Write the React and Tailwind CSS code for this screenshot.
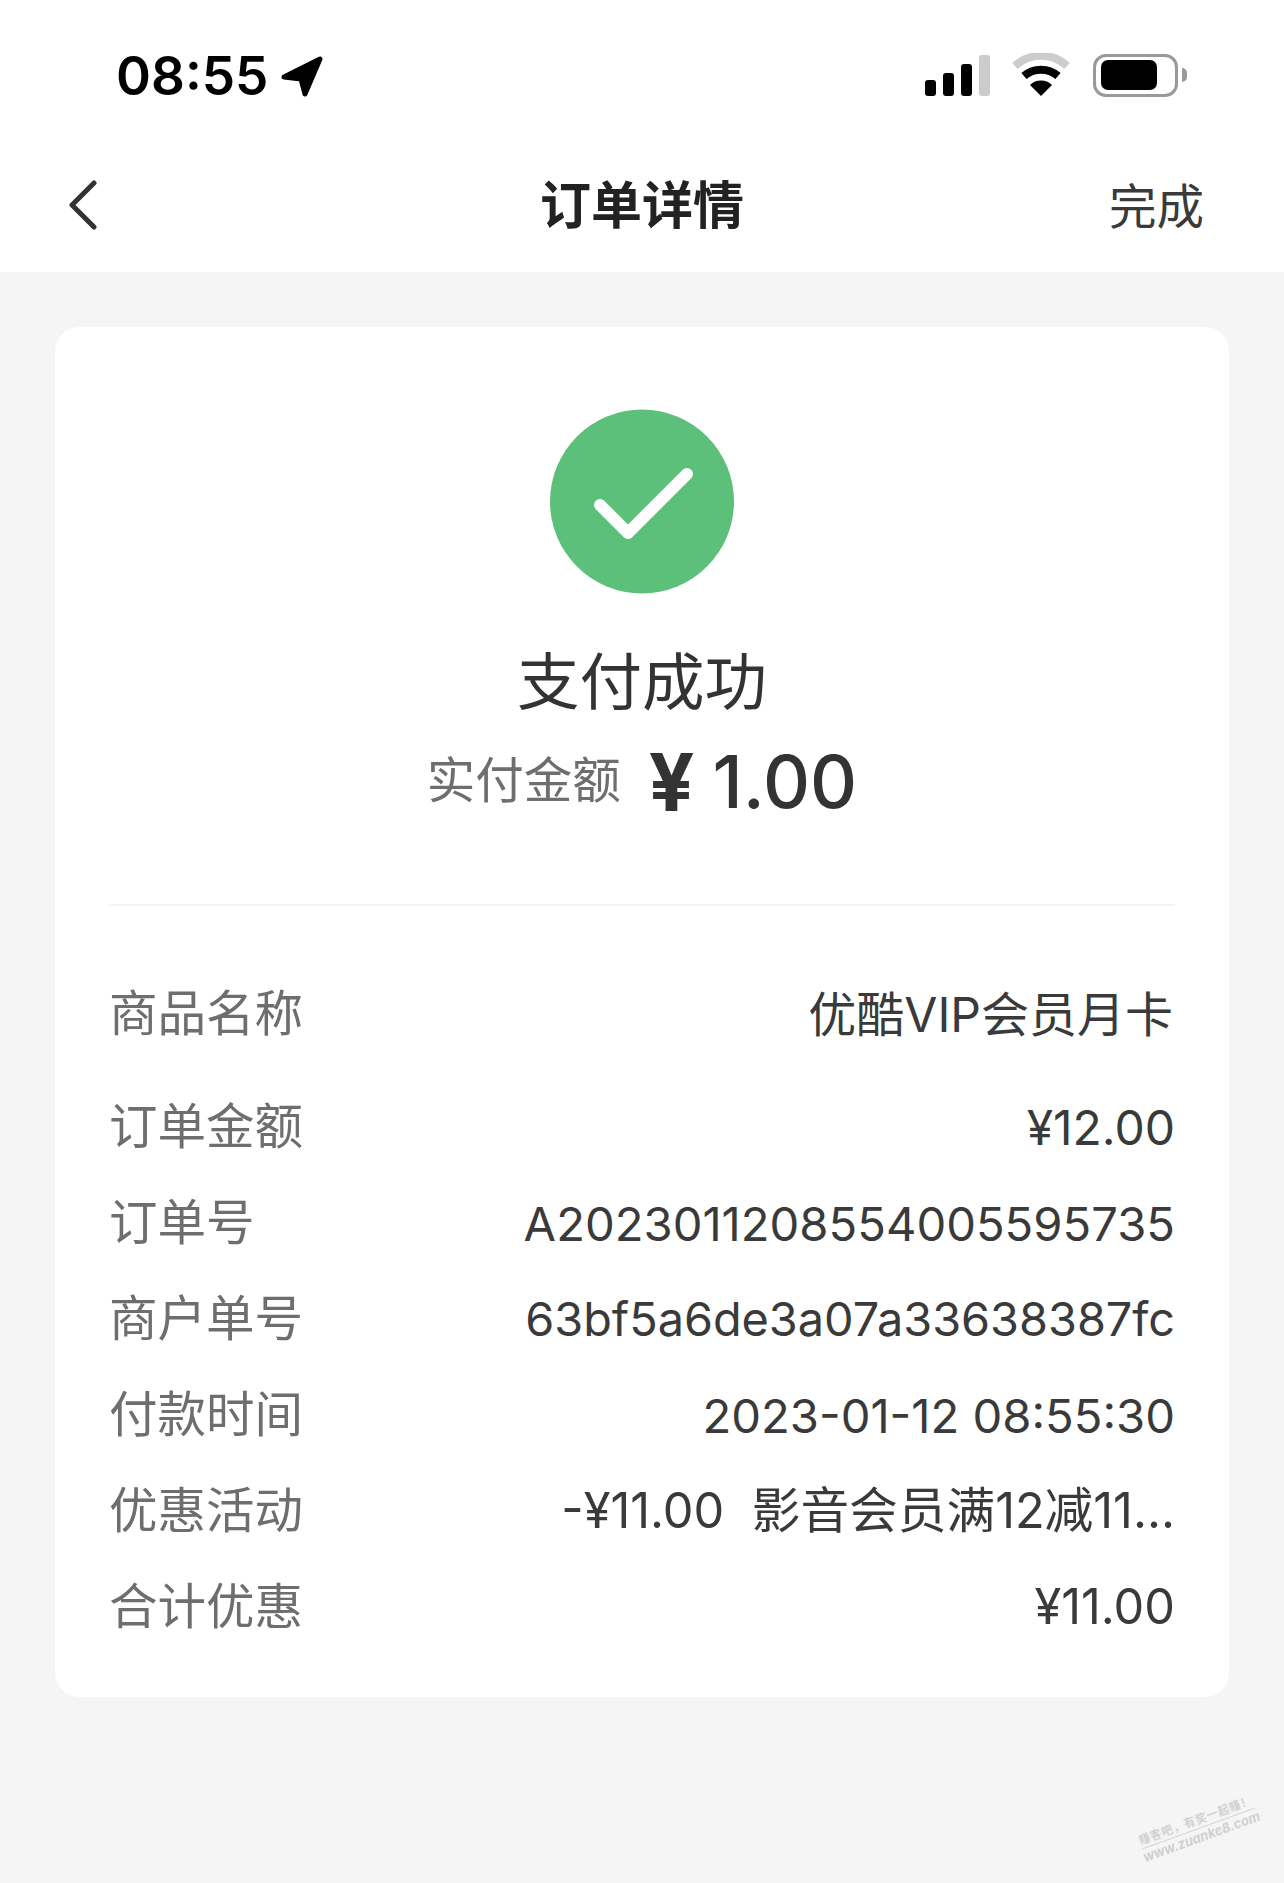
const sans = `font-['Inter','Noto_Sans_CJK_SC',sans-serif]`;

const rows = [
  ["订单金额", "¥12.00", "text-[48px]"],
  ["订单号", "A20230112085540055 95735".replace(" ", ""), "text-[47.2px]"],
  ["商户单号", "63bf5a6de3a07a33638387fc", "text-[46.8px]"],
  ["付款时间", "2023-01-12 08:55:30", "text-[47.2px]"],
  ["优惠活动", "-¥11.00  影音会员满12减11...", "text-[48.7px]"],
  ["合计优惠", "¥11.00", "text-[48.7px]"],
];

function Row({ label, value, size }) {
  return (
    <div className="flex h-[96px] items-center justify-between">
      <span className="text-[48.5px] leading-none text-[#6e6e6e]">{label}</span>
      <span className={`whitespace-pre leading-none text-[#3a3a3a] ${size}`}>{value}</span>
    </div>
  );
}

function StatusBar() {
  return (
    <div className="flex h-[122px] items-start justify-between pt-[53px] pl-[116px] pr-[97px]">
      <div className="flex items-center gap-[13px]">
        <span className="text-[53px] leading-[46px] font-semibold text-black">08:55</span>
        <svg width="42" height="42" viewBox="0 0 42 42">
          <path d="M3 22 L39 4 L24 39 L20 24 Z" fill="#000" stroke="#000" strokeWidth="5" strokeLinejoin="round" />
        </svg>
      </div>
      <div className="flex items-center">
        <div className="flex h-[42px] items-end gap-[7px]">
          <div className="h-[16px] w-[11px] rounded-[3px] bg-black" />
          <div className="h-[23px] w-[11px] rounded-[3px] bg-black" />
          <div className="h-[32px] w-[11px] rounded-[3px] bg-black" />
          <div className="h-[41px] w-[11px] rounded-[3px] bg-[#cccccc]" />
        </div>
        <svg className="ml-[22px]" width="58" height="44" viewBox="0 0 58 44">
          <path d="M3 13 A38 38 0 0 1 55 13" fill="none" stroke="#cccccc" strokeWidth="8" />
          <path d="M12 23 A26 26 0 0 1 46 23" fill="none" stroke="#000" strokeWidth="8" />
          <path d="M29 43 L18 32 A16 16 0 0 1 40 32 Z" fill="#000" />
        </svg>
        <div className="ml-[23px] flex items-center">
          <div className="flex h-[43px] w-[85px] items-center rounded-[13px] border-[3px] border-[#999999] pl-[5px]">
            <div className="h-[30px] w-[56px] rounded-[7px] bg-black" />
          </div>
          <div className="ml-[4px] h-[14px] w-[5px] rounded-r-full bg-[#999999]" />
        </div>
      </div>
    </div>
  );
}

export default function App() {
  return (
    <div className={`relative min-h-[1883px] overflow-hidden bg-[#f5f5f5] ${sans}`}>
      <header className="bg-white">
        <StatusBar />
        <div className="grid h-[150px] grid-cols-[1fr_auto_1fr] items-center px-[68px] pt-[16px]">
          <svg width="30" height="50" viewBox="0 0 30 50">
            <path d="M26 3 L4 25 L26 47" fill="none" stroke="#333333" strokeWidth="5" strokeLinecap="round" strokeLinejoin="round" />
          </svg>
          <h1 className="text-[51px] leading-none font-bold text-[#222222]">订单详情</h1>
          <span className="mt-[3px] mr-[12px] justify-self-end text-[47.5px] leading-none text-[#3a3a3a]">完成</span>
        </div>
      </header>

      <main className="mx-[55px] mt-[55px] h-[1370px] rounded-[24px] bg-white px-[54px] pt-[82px]">
        <div className="flex flex-col items-center">
          <svg width="184" height="185" viewBox="0 0 184 185">
            <circle cx="92" cy="92.5" r="92" fill="#5cc07a" />
            <path d="M50 96 L78 124 L137 65" fill="none" stroke="#fff" strokeWidth="12" strokeLinecap="round" strokeLinejoin="round" />
          </svg>
          <div className="mt-[57px] text-[62.5px] leading-none text-[#333333]">支付成功</div>
          <div className="mt-[28px] flex items-center gap-[28px]">
            <span className="text-[48.5px] leading-none text-[#6e6e6e]">实付金额</span>
            <span className="flex items-center text-[73px] leading-none font-medium text-[#333333]">
              <span className="mr-[18px] text-[80px] font-bold">¥</span>1.00
            </span>
          </div>
        </div>

        <div className="mt-[82px] border-t-2 border-[#f3f3f3]" />

        <div className="mt-[61px] flex h-[96px] items-center justify-between">
          <span className="text-[48.5px] leading-none text-[#6e6e6e]">商品名称</span>
          <span className="mr-[2px] text-[48px] leading-none text-[#3a3a3a]">优酷VIP会员月卡</span>
        </div>
        <div className="mt-[17px]">
          {rows.map(([label, value, size]) => (
            <Row key={label} label={label} value={value} size={size} />
          ))}
        </div>
      </main>

      {/* watermark */}
      <div className="absolute right-[24px] bottom-[38px] flex -rotate-[20deg] flex-col items-center text-[#cdcdcd] blur-[0.6px]">
        <span className="border-b border-[#d4d4d4] text-[11px] leading-[16px] font-bold tracking-[1px]">赚客吧，有奖一起赚！</span>
        <span className="text-[13px] leading-[16px] font-bold italic">www.zuanke8.com</span>
      </div>
    </div>
  );
}
